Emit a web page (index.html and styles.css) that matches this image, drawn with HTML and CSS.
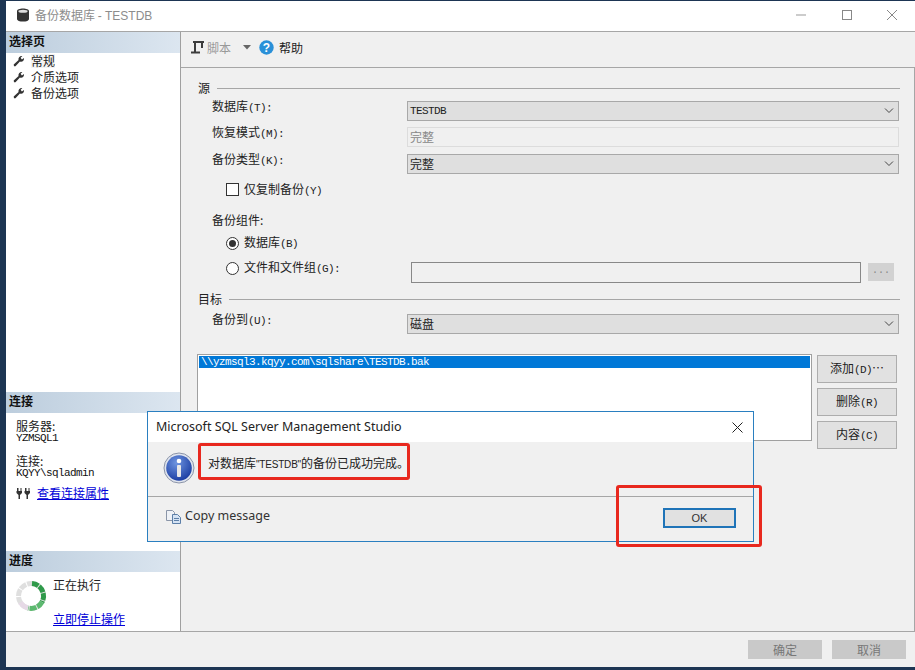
FILE: index.html
```html
<!DOCTYPE html>
<html lang="zh-CN">
<head>
<meta charset="utf-8">
<title>备份数据库 - TESTDB</title>
<link rel="stylesheet" href="styles.css">
</head>
<body>
<div class="window">
  <header class="titlebar">
    <svg class="db-icon" width="14" height="14" viewBox="0 0 14 14"><path d="M1 3c0-1.600 2.700-2.600 6-2.600s6 1 6 2.600v8c0 1.600-2.700 2.600-6 2.600s-6-1-6-2.600z" fill="#333"/><ellipse cx="7" cy="3.200" rx="4.600" ry="1.500" fill="#ddd"/></svg>
    <span class="title-text">备份数据库 <span class="title-lat">- TESTDB</span></span>
    <div class="winctl">
      <svg width="12" height="12" viewBox="0 0 12 12"><path d="M0 6h10" stroke="#999" fill="none"/></svg>
      <svg width="12" height="12" viewBox="0 0 12 12"><rect x="1.500" y="1.500" width="9" height="9" stroke="#888" fill="none"/></svg>
      <svg width="12" height="12" viewBox="0 0 12 12"><path d="M1 1l10 10M11 1L1 11" stroke="#888" fill="none"/></svg>
    </div>
  </header>

  <div class="body">
    <aside class="side">
      <section class="side-pages">
        <h2 class="band">选择页</h2>
        <ul class="pages">
          <li><svg class="wrench" width="12" height="12" viewBox="0 0 12 12"><path d="M1 11.300 0.700 9.600 5.600 5 C5 3 6.500.800 9.400.900L7.600 2.800 8.900 4.600 11 3 C11.400 5.800 9 7.400 6.900 6.500L2.500 11.300z" fill="#333"/></svg><span class="page-current">常规</span></li>
          <li><svg class="wrench" width="12" height="12" viewBox="0 0 12 12"><path d="M1 11.300 0.700 9.600 5.600 5 C5 3 6.500.800 9.400.900L7.600 2.800 8.900 4.600 11 3 C11.400 5.800 9 7.400 6.900 6.500L2.500 11.300z" fill="#333"/></svg><span>介质选项</span></li>
          <li><svg class="wrench" width="12" height="12" viewBox="0 0 12 12"><path d="M1 11.300 0.700 9.600 5.600 5 C5 3 6.500.800 9.400.900L7.600 2.800 8.900 4.600 11 3 C11.400 5.800 9 7.400 6.900 6.500L2.500 11.300z" fill="#333"/></svg><span>备份选项</span></li>
        </ul>
      </section>
      <section class="side-conn">
        <h2 class="band">连接</h2>
        <div class="conn-body">
          <div class="conn-label">服务器:</div>
          <div class="lat conn-val">YZMSQL1</div>
          <div class="conn-label conn-gap">连接:</div>
          <div class="lat conn-val">KQYY\sqladmin</div>
          <div class="conn-link">
            <svg width="15" height="13" viewBox="0 0 15 13"><path d="M1 1v3h-.5v2l2 2v4h1.500v-4l2-2v-2h-.5v-3h-1v3h-2v-3zM9 1v3h-.5v2l2 2v4h1.500v-4l2-2v-2h-.5v-3h-1v3h-2v-3z" fill="#333"/></svg>
            <a href="#">查看连接属性</a>
          </div>
        </div>
      </section>
      <section class="side-progress">
        <h2 class="band">进度</h2>
        <div class="progress-body">
          <svg class="spinner" width="32" height="32" viewBox="0 0 32 32">
            <g fill="none" stroke-width="5">
              <circle cx="16" cy="16" r="12.500" stroke="#dfdfdf" stroke-dasharray="6.800 1"/>
              <path d="M17 3.500A12.500 12.500 0 0 1 27 22" stroke="#2f9a4a" stroke-dasharray="6.800 1"/>
              <path d="M27 22A12.500 12.500 0 0 1 13 28" stroke="#5cb96f" stroke-dasharray="6.800 1"/>
              <path d="M13 28A12.500 12.500 0 0 1 5.500 22.500" stroke="#e6d9e6"/>
            </g>
          </svg>
          <div class="progress-text">
            <div>正在执行</div>
            <a href="#" class="stop-link">立即停止操作</a>
          </div>
        </div>
      </section>
    </aside>

    <main class="main">
      <div class="toolbar">
        <svg width="15" height="15" viewBox="0 0 15 15"><path d="M3 2h11M5 2v10M12 2v6M1 12.500h9" stroke="#3c3c3c" stroke-width="2" fill="none"/></svg>
        <span class="tool-disabled">脚本</span>
        <svg class="tool-arrow" width="8" height="5" viewBox="0 0 8 5"><path d="M0 0h8L4 4.500z" fill="#666"/></svg>
        <svg class="tool-help" width="15" height="15" viewBox="0 0 15 15"><circle cx="7.500" cy="7.500" r="7.200" fill="#2a90d8"/><text x="7.500" y="12" text-anchor="middle" font-size="12" font-weight="700" font-family="Liberation Sans" fill="#fff">?</text></svg>
        <span class="tool-help-text">帮助</span>
      </div>

      <div class="form">
        <div class="heading"><span>源</span><i></i></div>
        <div class="row m5"><label class="field-label">数据库<span class="lat">(T):</span></label>
          <div class="select"><span class="lat">TESTDB</span><svg width="10" height="6" viewBox="0 0 10 6"><path d="M1 .5l4 4 4-4" fill="none" stroke="#444"/></svg></div></div>
        <div class="row m6"><label class="field-label">恢复模式<span class="lat">(M):</span></label>
          <div class="readonly">完整</div></div>
        <div class="row m7"><label class="field-label">备份类型<span class="lat">(K):</span></label>
          <div class="select"><span>完整</span><svg width="10" height="6" viewBox="0 0 10 6"><path d="M1 .5l4 4 4-4" fill="none" stroke="#444"/></svg></div></div>
        <div class="option m7 check-row"><span class="checkbox"></span><span class="check-label">仅复制备份<span class="lat">(Y)</span></span></div>
        <div class="sublabel m14">备份组件:</div>
        <div class="option m7"><span class="radio on"></span><span>数据库<span class="lat">(B)</span></span></div>
        <div class="option m11 file-row"><span class="radio"></span><span class="file-label">文件和文件组<span class="lat">(G):</span></span>
          <div class="file-input"></div><div class="dots">...</div></div>
        <div class="heading m8"><span>目标</span><i></i></div>
        <div class="row m7"><label class="field-label">备份到<span class="lat">(U):</span></label>
          <div class="select"><span>磁盘</span><svg width="10" height="6" viewBox="0 0 10 6"><path d="M1 .5l4 4 4-4" fill="none" stroke="#444"/></svg></div></div>
        <div class="dest m20">
          <div class="listbox"><div class="list-item lat">\\yzmsql3.kqyy.com\sqlshare\TESTDB.bak</div></div>
          <div class="dest-buttons">
            <button class="btn">添加<span class="lat">(D)</span>…</button>
            <button class="btn">删除<span class="lat">(R)</span></button>
            <button class="btn">内容<span class="lat">(C)</span></button>
          </div>
        </div>
      </div>
    </main>
  </div>

  <footer class="footer">
    <button class="foot-btn">确定</button>
    <button class="foot-btn">取消</button>
  </footer>

  <div class="dialog">
    <div class="dialog-title"><span>Microsoft SQL Server Management Studio</span>
      <svg width="11" height="11" viewBox="0 0 11 11"><path d="M.5.500l10 10M10.500.500l-10 10" stroke="#222" fill="none"/></svg></div>
    <div class="dialog-msg">
      <svg width="32" height="32" viewBox="0 0 32 32">
        <defs><radialGradient id="g" cx=".4" cy=".3" r=".8"><stop offset="0" stop-color="#6f95e0"/><stop offset="1" stop-color="#12349c"/></radialGradient></defs>
        <circle cx="16" cy="16" r="15" fill="#dfe4ee" stroke="#8b94a8"/><circle cx="16" cy="16" r="12.800" fill="url(#g)"/>
        <circle cx="16" cy="9" r="2.300" fill="#fff"/><rect x="14" y="13" width="4" height="12" rx="1" fill="#e8e8e8"/>
      </svg>
      <span class="msg-text">对数据库<span class="msg-lat">"TESTDB"</span>的备份已成功完成。</span>
    </div>
    <div class="dialog-foot">
      <div class="copy">
        <svg width="15" height="14" viewBox="0 0 15 14"><path d="M.5.500h6l2 2v8h-8z" fill="#eef1f6" stroke="#8a95a8"/><path d="M6.500 4.500h5l3 3v6h-8z" fill="#d4e2f3" stroke="#5c7fa8"/><path d="M8 8.500h5M8 10.500h5" stroke="#5c7fa8"/></svg>
        <span>Copy message</span>
      </div>
      <button class="ok">OK</button>
    </div>
  </div>
  <div class="mark mark-msg"></div>
  <div class="mark mark-ok"></div>
</div>
</body>
</html>
```
FILE: styles.css
```css
* { box-sizing: border-box; }
html, body { margin: 0; height: 100%; }
body {
  background: #1d3553;
  overflow: hidden;
  font: 12px/14px "Noto Sans CJK SC", "Liberation Sans", sans-serif;
  color: #222;
}
.lat { font-family: "Liberation Mono", monospace; font-size: 11px; letter-spacing: -.6px; }
.window {
  height: 666px;
  margin: 1px 0 0 6px;
  background: #f0f0f0;
  display: flex;
  flex-direction: column;
}
.titlebar {
  height: 31px;
  flex: none;
  background: #fff;
  border-bottom: 1px solid #a6a6a6;
  display: flex;
  align-items: center;
  padding: 0 17px 2px 10px;
}
.db-icon { margin-right: 5px; }
.title-text { color: #8c8c8c; }
.title-lat { font-family: "Liberation Sans", sans-serif; font-size: 12px; }
.winctl { margin-left: auto; display: flex; gap: 33px; }
.body { flex: 1; display: flex; min-height: 0; border-bottom: 1px solid #a6a6a6; }
.side {
  width: 175px;
  flex: none;
  background: #fff;
  border-right: 1px solid #a0a0a0;
  display: flex;
  flex-direction: column;
}
.band {
  margin: 0;
  height: 21px;
  padding: 1px 0 0 3px;
  font-size: 12px;
  line-height: 15px;
  font-weight: 700;
  color: #111;
  background: linear-gradient(90deg, #bccddd, #dce6f0);
}
.side-pages { flex: 1; }
.pages { list-style: none; margin: 0; padding: 0 0 0 7px; }
.pages li { display: flex; align-items: center; height: 16px; gap: 6px; }
.page-current { background: #f3f3f3; }
.side-conn { height: 159px; flex: none; }
.conn-body { padding: 6px 0 0 10px; }
.conn-label { line-height: 14px; }
.conn-val { line-height: 11px; color: #111; }
.conn-gap { margin-top: 10px; }
.conn-link { display: flex; align-items: center; gap: 6px; margin-top: 7px; }
a { color: #0000d8; text-decoration: underline; }
.side-progress { height: 80px; flex: none; }
.progress-body { display: flex; padding: 8px 0 0 9px; gap: 6px; }
.progress-text { margin-top: -2px; }
.stop-link { display: block; margin-top: 20px; }
.main { flex: 1; display: flex; flex-direction: column; min-width: 0; }
.toolbar {
  height: 36px;
  flex: none;
  display: flex;
  align-items: center;
  padding: 0 0 4px 9px;
  border-bottom: 1px solid #a6a6a6;
}
.tool-disabled { color: #999; margin-left: 2px; }
.tool-arrow { margin-left: 12px; }
.tool-help { margin-left: 8px; }
.tool-help-text { margin-left: 5px; }
.form {
  flex: 1;
  padding-top: 12px;
  border-right: 1px solid #a6a6a6;
}
.heading { display: flex; align-items: center; height: 16px; padding: 0 14px 0 17px; gap: 7px; }
.heading i { flex: 1; height: 1px; background: #a6a6a6; }
.row { display: flex; height: 20px; padding-left: 31px; }
.field-label { width: 195px; line-height: 9px; flex: none; }
.select {
  width: 492px;
  height: 20px;
  background: #dfdfdf;
  border: 1px solid #a8a8a8;
  display: flex;
  align-items: center;
  justify-content: space-between;
  padding: 0 4px 0 2px;
}
.readonly {
  width: 492px;
  height: 20px;
  background: #f0f0f0;
  border: 1px solid #dcdcdc;
  padding-left: 2px;
  line-height: 18px;
  color: #888;
}
.m5 { margin-top: 5px; }
.m6 { margin-top: 6px; }
.m7 { margin-top: 7px; }
.m8 { margin-top: 8px; }
.m11 { margin-top: 11px; }
.m14 { margin-top: 14px; }
.m20 { margin-top: 20px; }
.option { display: flex; align-items: center; height: 16px; padding-left: 45px; gap: 5px; }
.check-row { height: 17px; }
.check-label { line-height: 17px; margin-top: 1px; }
.checkbox { width: 13px; height: 13px; border: 1px solid #333; background: #fff; flex: none; }
.radio { width: 13px; height: 13px; border: 1px solid #333; border-radius: 50%; background: #fff; flex: none; position: relative; }
.radio.on::after { content: ""; position: absolute; inset: 2px; border-radius: 50%; background: #333; }
.sublabel { height: 16px; line-height: 16px; padding-left: 31px; }
.file-row { height: 21px; align-items: flex-start; }
.file-label { width: 162px; flex: none; line-height: 9px; }
.file-input { width: 450px; height: 21px; background: #f0f0f0; border: 1px solid #888; flex: none; }
.dots { width: 26px; height: 18px; background: #d2d2d2; margin: 1px 0 0 2px; color: #888; text-align: center; font: 10px/16px "Liberation Mono", monospace; flex: none; }
.dest { display: flex; height: 95px; padding-left: 16px; gap: 5px; }
.listbox { width: 615px; height: 87px; background: #fff; border: 1px solid #a0a0a0; padding: 1px 1px 0; }
.list-item { width: 611px; height: 12px; margin-right: 1px; background: #0078d7; color: #fff; line-height: 12px; padding-left: 2px; }
.dest-buttons { display: flex; flex-direction: column; gap: 5px; margin-top: 1px; }
.btn {
  width: 80px;
  height: 28px;
  padding: 0;
  font: inherit;
  background: #e1e1e1;
  border: 1px solid #adadad;
  color: #222;
}
.footer { height: 35px; flex: none; display: flex; justify-content: flex-end; gap: 10px; padding: 8px 9px 0 0; }
.foot-btn { width: 74px; height: 19px; padding: 0; border: 0; background: #c9c9c9; color: #777; font: inherit; }
.dialog {
  position: absolute;
  left: 147px;
  top: 411px;
  width: 607px;
  height: 131px;
  background: #f0f0f0;
  border: 1px solid #2a7fc0;
  display: flex;
  flex-direction: column;
  font-family: "Noto Sans", "Noto Sans CJK SC", sans-serif;
}
.dialog-title {
  height: 30px;
  flex: none;
  background: #fff;
  display: flex;
  align-items: center;
  justify-content: space-between;
  padding: 0 10px 0 8px;
  font-size: 12.5px;
  color: #222;
}
.dialog-msg {
  height: 55px;
  flex: none;
  display: flex;
  align-items: center;
  padding: 0 0 2px 15px;
  gap: 13px;
  border-bottom: 1px solid #a6a6a6;
}
.msg-text { margin-top: -8px; font-family: "Noto Sans CJK SC", sans-serif; }
.msg-lat { font-family: "Liberation Sans", sans-serif; font-size: 10px; letter-spacing: -.2px; }
.dialog-foot { flex: 1; display: flex; justify-content: space-between; padding: 11px 17px 0 18px; }
.copy { display: flex; align-items: flex-start; gap: 4px; font-size: 12.5px; color: #333; margin-top: -1px; }
.copy svg { margin-top: 3px; }
.copy span { margin-top: 2px; }
.ok { width: 73px; height: 20px; background: #e1e1e1; border: 2px solid #1f74b8; font: 11px/14px "Liberation Sans", sans-serif; color: #333; padding: 0; }
.mark { position: absolute; border: 3px solid #e8281e; border-radius: 3px; }
.mark-msg { left: 198px; top: 443px; width: 212px; height: 37px; }
.mark-ok { left: 616px; top: 485px; width: 146px; height: 62px; }
```
